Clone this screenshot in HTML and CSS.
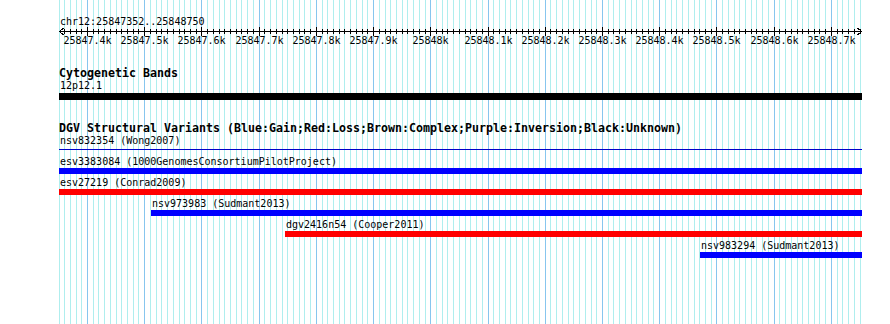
FILE: index.html
```html
<!DOCTYPE html>
<html lang="en">
<head>
    <meta charset="UTF-8">
    <meta name="viewport" content="width=device-width, initial-scale=1.0">
    <title>chr12:25847352..25848750</title>
    <link rel="stylesheet" href="styles.css">
</head>
<body>
    <div class="page">
        <svg class="grid" id="grid" width="890" height="324"></svg>
        <div class="panel">
            <div class="ruler-title">chr12:25847352..25848750</div>
            <svg class="ruler" id="ruler" width="803" height="20" viewBox="59 28 803 20"></svg>

            <div class="track-title cyto-title">Cytogenetic Bands</div>
            <div class="feature-label">12p12.1</div>
            <div class="band"></div>

            <div class="track-title dgv-title">DGV Structural Variants (Blue:Gain;Red:Loss;Brown:Complex;Purple:Inversion;Black:Unknown)</div>
            <div class="feature">
                <div class="feature-label">nsv832354 (Wong2007)</div>
                <div class="feature-bar thin"></div>
            </div>
            <div class="feature">
                <div class="feature-label">esv3383084 (1000GenomesConsortiumPilotProject)</div>
                <div class="feature-bar gain"></div>
            </div>
            <div class="feature">
                <div class="feature-label">esv27219 (Conrad2009)</div>
                <div class="feature-bar loss"></div>
            </div>
            <div class="feature" style="margin-left: 92px">
                <div class="feature-label">nsv973983 (Sudmant2013)</div>
                <div class="feature-bar gain"></div>
            </div>
            <div class="feature" style="margin-left: 226px">
                <div class="feature-label">dgv2416n54 (Cooper2011)</div>
                <div class="feature-bar loss"></div>
            </div>
            <div class="feature" style="margin-left: 641px">
                <div class="feature-label">nsv983294 (Sudmant2013)</div>
                <div class="feature-bar gain"></div>
            </div>
        </div>
    </div>

    <script>
        var START = 25847352;
        var END = 25848750;
        var SCALE = 800 / (END - START);

        function toX(bp) {
            var x = Math.round(59.5 + (bp - START) * SCALE);
            return Math.max(x, 59) + 0.5;
        }

        function drawGrid() {
            var out = "";
            for (var bp = 25847350; bp <= END; bp += 10) {
                var cls = bp % 100 === 0 ? "grid-major" : "grid-minor";
                var x = toX(bp);
                out += '<line class="' + cls + '" x1="' + x + '" y1="0" x2="' + x + '" y2="324"/>';
            }
            document.getElementById("grid").innerHTML = out;
        }

        function drawRuler() {
            var out = '<line class="axis" x1="59" y1="31.5" x2="861" y2="31.5"/>';
            out += '<path class="axis" d="M63.5 28 L59.5 31.5 L63.5 35"/>';
            out += '<path class="axis" d="M857.5 28 L861.5 31.5 L857.5 35"/>';
            for (var bp = 25847360; bp <= END; bp += 10) {
                var x = toX(bp);
                if (bp % 100 === 0) {
                    out += '<line class="axis" x1="' + x + '" y1="27" x2="' + x + '" y2="36"/>';
                    out += '<text class="tick-label" x="' + x + '" y="44">' + (bp / 1000) + 'k</text>';
                } else {
                    out += '<line class="axis" x1="' + x + '" y1="29" x2="' + x + '" y2="34"/>';
                }
            }
            document.getElementById("ruler").innerHTML = out;
        }

        drawGrid();
        drawRuler();
    </script>
</body>
</html>
```

FILE: styles.css
```css
body {
    margin: 0;
    padding: 0;
    background-color: #fff;
    font-family: "DejaVu Sans Mono", "Liberation Mono", monospace;
    font-size: 10px;
    color: #000;
}
.page {
    position: relative;
    width: 890px;
    height: 324px;
    overflow: hidden;
}
.grid {
    position: absolute;
    left: 0;
    top: 0;
    shape-rendering: crispEdges;
}
.grid-minor {
    stroke: #afeeee;
    stroke-width: 1;
}
.grid-major {
    stroke: #87c6ee;
    stroke-width: 1;
}
.panel {
    position: relative;
    margin-left: 59px;
    width: 803px;
}
.ruler-title {
    padding-top: 15px;
    padding-left: 1px;
    line-height: 13px;
    white-space: nowrap;
}
.ruler {
    display: block;
    overflow: visible;
    shape-rendering: crispEdges;
}
.axis {
    stroke: #000;
    stroke-width: 1;
    fill: none;
}
.tick-label {
    font-family: "DejaVu Sans Mono", "Liberation Mono", monospace;
    font-size: 10px;
    text-anchor: middle;
    fill: #000;
}
.track-title {
    font-size: 11.63px;
    font-weight: bold;
    line-height: 13px;
    white-space: nowrap;
}
.cyto-title {
    margin-top: 19px;
}
.dgv-title {
    margin-top: 22px;
}
.feature-label {
    line-height: 12px;
    padding-left: 1px;
    white-space: nowrap;
}
.band {
    margin-top: 1px;
    height: 7px;
    background-color: #000;
}
.feature {
    padding-bottom: 3px;
}
.feature-bar {
    height: 6px;
}
.feature-bar.gain {
    background-color: #0000ff;
}
.feature-bar.loss {
    background-color: #ff0000;
}
.feature-bar.thin {
    height: 1px;
    padding: 2px 0 3px;
    background-color: #0000c8;
    background-clip: content-box;
}
```
